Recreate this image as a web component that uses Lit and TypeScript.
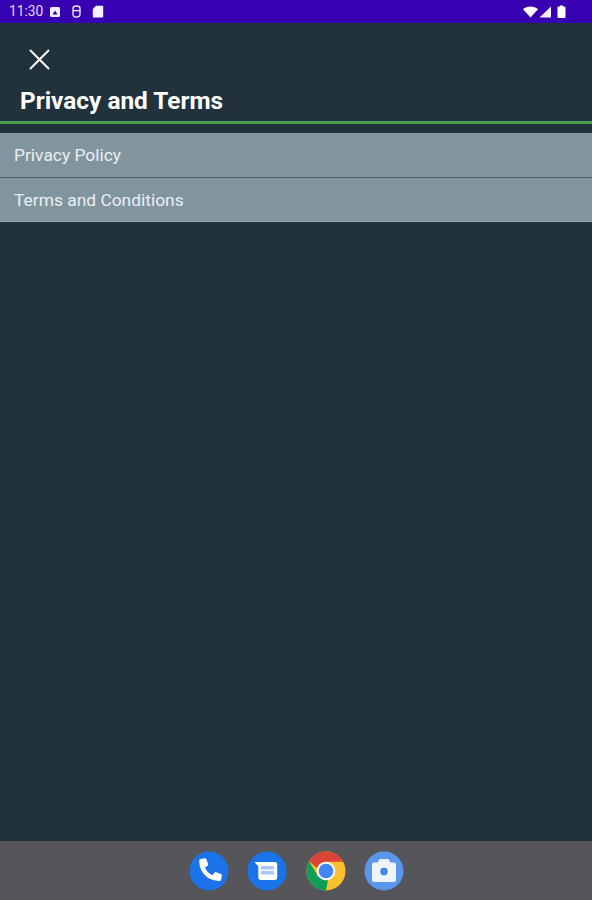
import { LitElement, html, css } from "lit";
import { customElement } from "lit/decorators.js";

@customElement("app-root")
export class AppRoot extends LitElement {
  static styles = css`
    :host { display: block; width: 592px; height: 900px; font-family: Roboto, "Liberation Sans", sans-serif; }
    .page { width: 592px; height: 900px; display: flex; flex-direction: column; background: #21323c; overflow: hidden; }
    .status { height: 23px; flex: none; background: #3700b0; display: flex; align-items: center; padding: 0 26px 0 9px; color: #e4dcf5; box-sizing: border-box; }
    .time { font-size: 13.8px; line-height: 23px; width: 36px; margin-right: 4px; }
    .status svg { display: block; flex: none; }
    .s1 { margin-right: 10px; }
    .s2 { margin-right: 10px; }
    .spacer { flex: 1; }
    .r1 { margin-right: 1px; }
    .r2 { margin-right: 6px; }
    .header { height: 98px; flex: none; box-sizing: border-box; padding: 26px 0 0 20px; }
    .close { display: block; margin-left: 9px; }
    .title { margin: 16px 0 0; font-size: 24.4px; line-height: 30px; font-weight: 700; color: #fff; }
    .rule { height: 3px; flex: none; background: #4a9f50; }
    .list { margin-top: 9px; display: flex; flex-direction: column; }
    .row { height: 44px; box-sizing: border-box; padding-left: 14px; display: flex; align-items: center; background: #81959f; color: #eceff1; font-size: 17.4px; }
    .row + .row { height: 45px; border-top: 1px solid #4d5f69; }
    .row:last-child { border-bottom: 1px solid #9aabb3; }
    .main { flex: 1; }
    .dock { height: 59px; flex: none; background: #55555a; display: flex; justify-content: center; align-items: center; gap: 18.67px; padding-left: 1px; box-sizing: border-box; }
    .dock svg { display: block; }
  `;

  render() {
    return html`<div class="page">
      <div class="status">
        <span class="time">11:30</span>
        <svg class="s1" width="12" height="12" viewBox="0 0 12 12"><rect x="1" y="1" width="10" height="10" rx="1.5" fill="#f2eefa"/><path d="M3.500 8.500 6 4.500l2.500 4z" fill="#3700b3"/></svg>
        <svg class="s2" width="11" height="13" viewBox="0 0 11 13" fill="none" stroke="#eee8f8" stroke-width="1.4"><path d="M2 3.200C2 1.800 3.200 1 5.500 1S9 1.800 9 3.200V9c0 2-1.500 3-3.500 3S2 11 2 9z"/><path d="M2 5.600h7"/></svg>
        <svg width="12" height="13" viewBox="0 0 12 13"><path d="M4 .8h6.200c.6 0 1 .4 1 1v9.600c0 .6-.4 1-1 1H1.800c-.6 0-1-.4-1-1V4z" fill="#f5f2fb"/></svg>
        <span class="spacer"></span>
        <svg class="r1" width="15" height="12" viewBox="0 0 15 12"><path d="M0 3.200C2 1.300 4.600.5 7.500.5s5.500.8 7.500 2.700L7.500 11.500z" fill="#fff"/></svg>
        <svg class="r2" width="12" height="12" viewBox="0 0 12 12"><path d="M12 .5V11.500H.5z" fill="#f4f1fa"/></svg>
        <svg width="9" height="13" viewBox="0 0 9 13"><path d="M3 .5h3v1h1.600c.5 0 .9.400.9.900v9.700c0 .5-.4.900-.9.900H1.400c-.5 0-.9-.4-.9-.9V2.400c0-.5.400-.9.900-.9H3z" fill="#fff"/></svg>
      </div>
      <div class="header">
        <svg class="close" width="21" height="21" viewBox="0 0 21 21" stroke="#fff" stroke-width="2" fill="none"><path d="M1 1l19 19M20 1 1 20"/></svg>
        <h1 class="title">Privacy and Terms</h1>
      </div>
      <div class="rule"></div>
      <div class="list">
        <div class="row">Privacy Policy</div>
        <div class="row">Terms and Conditions</div>
      </div>
      <div class="main"></div>
      <div class="dock">
        <svg width="40" height="40" viewBox="0 0 40 40"><circle cx="20" cy="20" r="19.500" fill="#1a73e8"/><path transform="translate(-4.600 -3.700) scale(1.230)" d="M13.200 9.500l3.300-.6c.6-.1 1.100.2 1.300.7l1.500 4.200c.2.500 0 1-.4 1.300l-2.200 1.600c1.200 2.700 3.300 4.800 6 6l1.700-2.100c.3-.4.900-.6 1.400-.4l4 1.600c.5.200.8.800.7 1.300l-.7 3.200c-.1.600-.6 1-1.200 1C18.700 27.300 11.900 20 12.100 10.700c0-.6.500-1.100 1.100-1.200z" fill="#fff"/></svg>
        <svg width="40" height="40" viewBox="0 0 40 40"><circle cx="20" cy="20" r="19.500" fill="#1a73e8"/><path d="M7.500 11h20.500c1.300 0 2.200 1 2.200 2.200v13.600c0 1.300-1 2.200-2.200 2.200H13.500c-1.200 0-2.200-1-2.200-2.200V15.500z" fill="#fff"/><path d="M14 15h13v3.600H14zM14 20h13v3.600H14z" fill="#a8c7fa"/></svg>
        <svg width="40" height="40" viewBox="0 0 40 40">
          <circle cx="20" cy="20" r="19.500" fill="#fbc02d"/>
          <path d="M3.100 10.300A19.500 19.500 0 0 1 37.200 10.800L20 10.800a9.200 9.200 0 0 0-8.800 6.500z" fill="#db4437"/>
          <path d="M3.100 10.300 11.800 25 22 29 20 39.500A19.500 19.500 0 0 1 3.100 10.300z" fill="#0f9d58"/>
          <circle cx="20" cy="20" r="9.300" fill="#fff"/><circle cx="20" cy="20" r="7.300" fill="#4285f4"/>
        </svg>
        <svg width="40" height="40" viewBox="0 0 40 40"><circle cx="20" cy="20" r="19.500" fill="#5a95ee"/><path d="M15.500 8h9l2 3.500h3.500c1.100 0 2 .9 2 2v15.500c0 1.100-.9 2-2 2H10c-1.100 0-2-.9-2-2V13.500c0-1.100.9-2 2-2h3.500z" fill="#eef2f9"/><circle cx="20" cy="20.500" r="5.600" fill="#fff"/><circle cx="20" cy="20.500" r="3.900" fill="#4a86e8"/></svg>
      </div>
    </div>`;
  }
}
